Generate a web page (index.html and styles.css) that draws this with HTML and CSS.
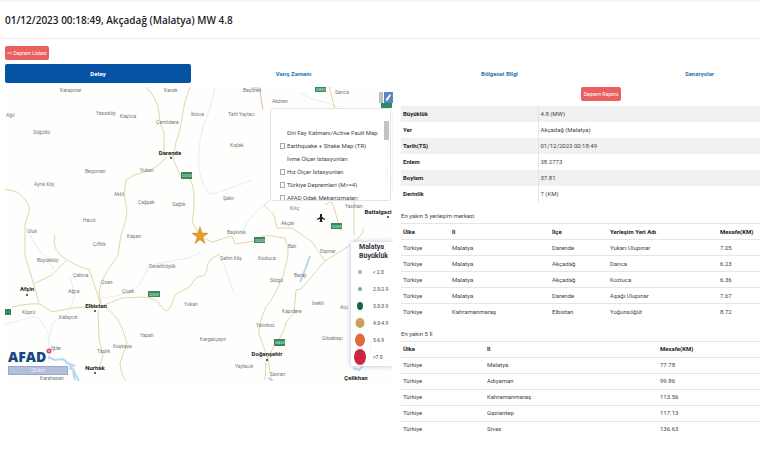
FILE: index.html
```html
<!DOCTYPE html>
<html lang="tr">
<head>
<meta charset="utf-8">
<meta name="viewport" content="width=device-width, initial-scale=1">
<title>Akçadağ (Malatya) MW 4.8</title>
<link rel="stylesheet" href="styles.css">
</head>
<body>
<header class="page-head"><h1>01/12/2023 00:18:49, Akçadağ (Malatya) MW 4.8</h1></header>
<main class="page">
  <button class="btn" type="button">&lt;&lt; Deprem Listesi</button>
  <nav class="tabs">
    <a class="tab active" href="#detay">Detay</a>
    <a class="tab" href="#varis">Varış Zamanı</a>
    <a class="tab" href="#bolge">Bölgesel Bilgi</a>
    <a class="tab" href="#senaryo">Senaryolar</a>
  </nav>
  <div class="columns">
    <section class="map" id="detay">
      <svg class="canvas" viewBox="5 87 388 294" role="img" aria-label="Harita">
        <g class="water">
          <path d="M215 87c-3 22-13 38-15 54s-3 30 4 44 10 8 20 5 18-6 28-10"/>
          <path d="M5 324q12-2 22-6t16 6 6 14 0 24"/><path d="M49 340l4-18 14-7 8-20-5-18M100 298q20-1 32-8t16-24l28-6q18-2 24-8"/>
          <path d="M30 235q8 15 15 22t8 12"/><path d="M222 260q8 20 12 34M240 235q12-25 35-38l35-7M300 92q10 8 25 10l12 5"/>
          <path d="M393 110v80M350 180q12-8 20 0t23 0"/>
        </g>
        <g class="lake">
          <path d="M48 357l7 3 8-1 8 7 8 15M65 362l10 4M75 380l-2-8M69 368l6 2M388 120v40M387 165v18"/>
          <path d="M310 256l-5 14-5 12M372 340l-4 20-9 10-6-2M268 378l5 3"/>
        </g>
        <g class="road-edge">
          <path d="M146 87q12 12 13 26t5 18v22l9 5"/><path d="M190 87q-6 14-8 30t-6 25l-3 16 4 10 4 9 9 2q5 10 4 26t-2 17l6 10"/>
          <path d="M167 157q-12 13-23 15t-18 8q-3 15 0 25t-5 30l-3 20-12 18q-6 9-7 20l2 11"/>
          <path d="M5 189l12 3q15 12 12 20l-4 12 0 32 8 26 6 21"/>
          <path d="M55 235q-4 16 12 25t22 9l10 30 2 8M33 284l19-9 14-14"/>
          <path d="M12 307q16-4 28-3l12 8 20-4 30-2 20-8 22-1q12 1 16 8l6 6q4 0 9-16l14-8 8-10q10 0 10-8t6-11l7-4"/>
          <path d="M104 306q12 8 18 22l5 15-7 20q1 12 6 18M98 310l1 28 4 18-4 12"/>
          <path d="M200 236l12 6 20-6 3 8 20-3q7-7 17-5l13 2q4 10 3 18l-5 20q-8 20-17 31-8 18-7 27l9 25 3 20"/>
          <path d="M264 205l10 10 3 13 15 0 20 14 13 19 24-15q12-8 15-17"/>
          <path d="M325 261l-24 28-5 1-2 23-8 9q-2 12-10 20l-10 20-1 18"/>
          <path d="M329 87l6 22M325 205q7-6 8 0l8 26M354 201v34M393 243q-18 5-20 0"/>
        </g>
        <path class="road-red" d="M251 88l9 0 1 10 2 12"/>
        <g class="shields">
          <rect x="181" y="172" width="11" height="7"/><rect x="315" y="87" width="11" height="5"/><rect x="148" y="291" width="12" height="6"/><rect x="254" y="237" width="11" height="6"/><rect x="331" y="223" width="11" height="6"/><rect x="274" y="339" width="11" height="7"/><rect x="5" y="309" width="6" height="6"/>
        </g>
        <g class="shield-text"><text x="187" y="177">D260</text><text x="321" y="91">D850</text><text x="154" y="296">D300</text><text x="260" y="242">D300</text><text x="337" y="228">D300</text><text x="280" y="344">D850</text></g>
        <g class="places">
          <text x="6" y="117">Ağıl</text><text x="33" y="134">Söğütlü</text><text x="96" y="115">Yassıköy</text><text x="120" y="118">Kaşlıca</text><text x="156" y="124">Çamlıdere</text><text x="191" y="116">İkizce</text><text x="85" y="173">Beypınarı</text><text x="34" y="186">Ayrık Köy</text><text x="140" y="172">Yukarı</text><text x="114" y="196">Aktil</text><text x="138" y="204">Çağşak</text><text x="172" y="206">Sağlık</text><text x="83" y="222">Hacılı</text><text x="27" y="233">Oluk</text>
          <text x="60" y="92">Karapınar</text><text x="164" y="92">Kavak</text><text x="243" y="92">Başören</text><text x="335" y="94">Sarıca</text><text x="272" y="103">Akören</text><text x="228" y="116">Taht Yaylacı</text><text x="230" y="147">Kışlak</text><text x="223" y="200">Şakir</text><text x="227" y="234">Başkınık</text><text x="281" y="225">Akçalı</text><text x="290" y="210">Kılıç</text><text x="345" y="208">Yazıhan</text>
          <text x="93" y="246">Çiftlik</text><text x="127" y="238">Kaşan</text><text x="37" y="262">Büyükköy</text><text x="149" y="268">Develihöyük</text><text x="73" y="277">Çatova</text><text x="101" y="284">Ozan</text><text x="122" y="293">Çiçek</text><text x="68" y="293">Ağca</text><text x="22" y="314">Köprü</text><text x="59" y="319">Kalaycık</text><text x="140" y="337">Yapalı</text><text x="97" y="353">Taşlık</text><text x="113" y="348">Kuşkaya</text><text x="51" y="350">İğde</text><text x="184" y="306">Yukarı</text>
          <text x="220" y="260">Şahin Köy</text><text x="258" y="260">Kozluca</text><text x="270" y="282">Sürgü</text><text x="288" y="248">Balı</text><text x="320" y="253">Dipınar</text><text x="294" y="277">Barajı</text><text x="312" y="305">İnekli</text><text x="340" y="309">Alçı</text><text x="282" y="313">Kapıdere</text><text x="256" y="327">Yalınkoz</text><text x="322" y="340">Gözebaşı</text><text x="200" y="341">Kargalıçayır</text><text x="235" y="368">Yaylacık</text><text x="270" y="376">Savran</text><text x="40" y="380">Karahasan</text>
        </g>
        <g class="towns"><text x="170" y="155">Darende</text><text x="27" y="291">Afşin</text><text x="96" y="308">Elbistan</text><text x="95" y="370">Nurhak</text><text x="267" y="356">Doğanşehir</text><text x="378" y="214">Battalgazi</text><text x="356" y="380">Çelikhan</text></g>
        <g class="dots"><circle cx="171" cy="158" r="1"/><circle cx="27" cy="295" r="1"/><circle cx="95" cy="311" r="1"/><circle cx="95" cy="373" r="1"/><circle cx="267" cy="360" r="1"/><circle cx="388" cy="217" r="1"/><path d="M320 214h2v3l3 2v1l-3-1v2l1 1h-4l1-1v-2l-3 1v-1l3-2z"/></g>
        <path class="star" d="M200 229l1.500 4.500 4.500 .3-4 3 1.500 4.700-3.500-2.800-3.500 2.800 1.500-4.700-4-3 4.500-.3z"/>
      </svg>
      <button class="layer-toggle" type="button" aria-label="Katmanlar"><svg viewBox="0 0 14 16"><path fill="#b9c0c7" d="M0 0h4v11H0z"/><path fill="#5b84c4" d="M5 0h9v11H5z"/><path fill="#fff" d="M7 7l4-5 1 1-3 5-2 1z"/><path fill="#2b8b63" d="M2 11h11v5H2z"/></svg></button>
      <form class="layers">
        <label><span class="box-gap"></span>Diri Fay Katmanı/Active Fault Map</label>
        <label><input type="checkbox">Earthquake + Shake Map (TR)</label>
        <label><span class="box-gap"></span>İvme Ölçer İstasyonları</label>
        <label><input type="checkbox">Hız Ölçer İstasyonları</label>
        <label><input type="checkbox">Türkiye Depremleri (M&gt;=4)</label>
        <label><input type="checkbox">AFAD Odak Mekanizmaları</label>
        <span class="scroll"></span>
      </form>
      <aside class="legend">
        <h2>Malatya<br>Büyüklük</h2>
        <ul>
          <li><svg viewBox="0 0 14 16"><circle cx="7" cy="8" r="2" fill="#b9b09a"/></svg>&lt; 2.0</li>
          <li><svg viewBox="0 0 14 16"><circle cx="7" cy="8" r="2" fill="#83a88f"/></svg>2.0-2.9</li>
          <li><svg viewBox="0 0 14 16"><ellipse cx="7" cy="8" rx="3" ry="4" fill="#12664a"/></svg>3.0-3.9</li>
          <li><svg viewBox="0 0 14 16"><ellipse cx="7" cy="8" rx="4.500" ry="5" fill="#cf9f62"/></svg>4.0-4.9</li>
          <li><svg viewBox="0 0 14 16"><ellipse cx="7" cy="8" rx="5" ry="6.500" fill="#dc6c3c"/></svg>5-6.9</li>
          <li><svg viewBox="0 0 14 16"><ellipse cx="7" cy="8" rx="6" ry="8" fill="#cf2442"/></svg>&gt;7.0</li>
        </ul>
      </aside>
      <div class="brand"><div class="logo">AFAD<svg viewBox="0 0 6 8"><circle cx="3" cy="3" r="2.500" fill="#d94561"/><path d="M2 3h2" stroke="#fff"/></svg></div><div class="scale">20 km</div></div>
    </section>
    <section class="info">
      <button class="btn report" type="button">Deprem Raporu</button>
      <table class="details">
        <tr><th scope="row">Büyüklük</th><td>4.8 (MW)</td></tr>
        <tr><th scope="row">Yer</th><td>Akçadağ (Malatya)</td></tr>
        <tr><th scope="row">Tarih(TS)</th><td>01/12/2023 00:18:49</td></tr>
        <tr><th scope="row">Enlem</th><td>38.2773</td></tr>
        <tr><th scope="row">Boylam</th><td>37.81</td></tr>
        <tr><th scope="row">Derinlik</th><td>7 (KM)</td></tr>
      </table>
      <table class="list places-list">
        <caption>En yakın 5 yerleşim merkezi</caption>
        <colgroup><col class="c-country"><col class="c-city"><col class="c-town"><col class="c-place"><col></colgroup>
        <thead><tr><th>Ülke</th><th>İl</th><th>İlçe</th><th>Yerleşim Yeri Adı</th><th>Mesafe(KM)</th></tr></thead>
        <tbody>
        <tr><td>Türkiye</td><td>Malatya</td><td>Darende</td><td>Yukarı Ulupınar</td><td>7.05</td></tr>
        <tr><td>Türkiye</td><td>Malatya</td><td>Akçadağ</td><td>Darıca</td><td>6.23</td></tr>
        <tr><td>Türkiye</td><td>Malatya</td><td>Akçadağ</td><td>Kozluca</td><td>6.36</td></tr>
        <tr><td>Türkiye</td><td>Malatya</td><td>Darende</td><td>Aşağı Ulupınar</td><td>7.67</td></tr>
        <tr><td>Türkiye</td><td>Kahramanmaraş</td><td>Elbistan</td><td>Yoğunsöğüt</td><td>8.72</td></tr>
        </tbody>
      </table>
      <table class="list">
        <caption>En yakın 5 İl</caption>
        <colgroup><col class="p-country"><col class="p-city"><col></colgroup>
        <thead><tr><th>Ülke</th><th>İl</th><th>Mesafe(KM)</th></tr></thead>
        <tbody>
        <tr><td>Türkiye</td><td>Malatya</td><td>77.78</td></tr>
        <tr><td>Türkiye</td><td>Adıyaman</td><td>99.86</td></tr>
        <tr><td>Türkiye</td><td>Kahramanmaraş</td><td>113.56</td></tr>
        <tr><td>Türkiye</td><td>Gaziantep</td><td>117.13</td></tr>
        <tr><td>Türkiye</td><td>Sivas</td><td>136.63</td></tr>
        </tbody>
      </table>
    </section>
  </div>
</main>
</body>
</html>
```
FILE: styles.css
```css
* { box-sizing: border-box; }
body { margin: 0; background: #fff; color: #444; font: 6px/8px "Roboto", "Noto Sans", sans-serif; overflow-x: hidden; }
button, input { font: inherit; margin: 0; }
.page-head { border-top: 2px solid #f5f5f6; border-bottom: 1px solid #eee; padding: 10px 5px; }
h1 { margin: 0; font: 600 10px/16px "Open Sans", "Noto Sans", sans-serif; color: #222; }
.page { padding: 7px 0 0 5px; }
.btn { display: block; width: 44px; height: 14px; padding: 0; border: 0; border-radius: 2px; background: #ea5f5f; color: #fff; font-size: 5px; white-space: nowrap; }
.tabs { display: grid; grid-template-columns: 186fr 205fr 207fr 193fr; margin: 4px -36px 4px 0; }
.tab { height: 19px; line-height: 19px; text-align: center; font-weight: 700; color: #1c76b5; text-decoration: none; border-radius: 2px; }
.tab.active { background: #0653a3; color: #fff; }
.columns { display: grid; grid-template-columns: 388fr 359fr; gap: 8px; }
.map { position: relative; align-self: start; overflow: hidden; background: #fefefd; }
.canvas { display: block; width: 100%; height: auto; }
.canvas path { fill: none; }
.water path { stroke: #e6edf3; stroke-width: 1; }
.lake path { stroke: #b5d8f2; stroke-width: 2; }
.road-edge path { stroke: #e2d6a6; stroke-width: 1; stroke-linejoin: round; }
.canvas .road-red { stroke: #e7b5a4; stroke-width: 1; }
.shields rect { fill: #37885a; }
.shield-text { font-size: 4px; fill: #d9eee0; text-anchor: middle; }
.places { font-size: 5px; fill: #777; }
.towns { font-size: 6px; font-weight: 700; fill: #222; text-anchor: middle; }
.dots { fill: #333; }
.canvas .dots path { fill: #222; }
.canvas .star { fill: #ec9c26; stroke: #d99429; stroke-width: 2; paint-order: stroke; }
.layer-toggle { position: absolute; top: 5px; right: 0; width: 14px; height: 16px; padding: 0; border: 0; background: none; }
.layer-toggle svg { display: block; width: 14px; height: 16px; }
.layers { position: absolute; top: 21px; right: 2px; width: 121px; height: 93px; padding: 17px 8px 0 9px; overflow: hidden; border: 1px solid #dfe4ec; border-radius: 3px; background: rgb(255 255 255 / 85%); }
.layers label { display: flex; align-items: center; gap: 2px; height: 13px; white-space: nowrap; color: #444; }
.layers input, .box-gap { flex: none; width: 5px; height: 6px; }
.layers input { appearance: none; border: 1px solid #aaa; background: #fff; }
.scroll { position: absolute; top: 12px; right: 1px; width: 5px; height: 19px; background: #c1c3c6; }
.legend { position: absolute; right: 0; bottom: 15px; width: 42px; padding: 1px 2px; background: rgb(255 255 255 / 88%); box-shadow: 0 0 5px #b9bbdc; }
.legend h2 { margin: 0 0 2px; padding-left: 6px; font-size: 7px; line-height: 9px; color: #333; }
.legend ul { margin: 0; padding: 0; list-style: none; }
.legend li { display: flex; align-items: center; gap: 6px; height: 17px; font-size: 5px; white-space: nowrap; }
.legend li svg { flex: none; width: 14px; height: 16px; }
.brand { position: absolute; left: 3px; bottom: 6px; width: 60px; }
.logo { display: flex; align-items: flex-start; font: 800 14px/18px "Open Sans", sans-serif; color: #164682; }
.logo svg { width: 6px; height: 8px; }
.scale { height: 9px; border: 1px solid #98a8cc; background: #b3bfdb; color: #f3f5fa; font-size: 5px; line-height: 7px; text-align: center; }
.report { width: 40px; margin: 0 auto 5px 180px; }
table { width: 100%; border-collapse: collapse; table-layout: fixed; }
th, td { height: 16px; padding: 0 0 0 2px; text-align: left; white-space: nowrap; }
th { color: #222; font-weight: 700; }
.details th { width: 137px; }
.details td { border-left: 1px solid #e4e4e4; }
.details tr:nth-child(odd) { background: #f1f1f1; }
caption { height: 21px; padding-top: 6px; line-height: 16px; text-align: left; color: #444; }
.list tr { border-top: 1px solid #e5e5e5; }
.c-country { width: 49px; }
.c-city { width: 100px; }
.c-town { width: 58px; }
.c-place { width: 110px; }
.p-country { width: 84px; }
.p-city { width: 173px; }
```
